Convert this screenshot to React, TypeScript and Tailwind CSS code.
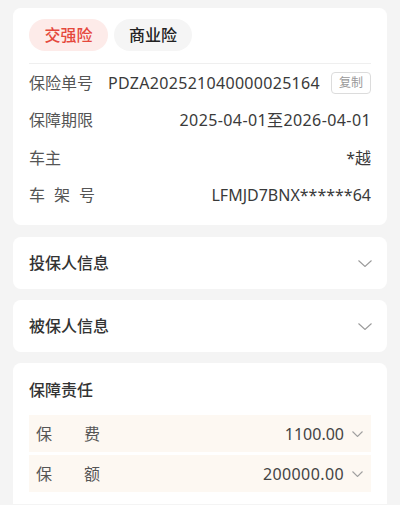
import React from "react";

const font = { fontFamily: '"Noto Sans", "Noto Sans CJK SC", sans-serif' };

function Chevron({ w, h, color }: { w: number; h: number; color: string }) {
  return (
    <svg width={w} height={h} viewBox={`0 0 ${w} ${h}`} fill="none">
      <polyline points={`0.5,0.5 ${w / 2},${h - 0.5} ${w - 0.5},0.5`} stroke={color} strokeWidth="1.1" />
    </svg>
  );
}

function InfoRow({
  label,
  value,
  spaced,
  extra,
  valueClass,
}: {
  label: string;
  value: string;
  spaced?: boolean;
  extra?: React.ReactNode;
  valueClass?: string;
}) {
  return (
    <div className="flex h-[37.5px] items-center justify-between text-[16px]">
      {spaced ? (
        <div className="flex w-[66px] justify-between text-[#555]">
          {label.split("").map((c, i) => (
            <span key={i}>{c}</span>
          ))}
        </div>
      ) : (
        <span className="text-[#555]">{label}</span>
      )}
      <div className="flex items-center">
        <span className={`text-[#3a3a3a] ${valueClass ?? ""}`}>{value}</span>
        {extra}
      </div>
    </div>
  );
}

function Collapse({ title }: { title: string }) {
  return (
    <div className="flex h-[52px] items-center justify-between rounded-[8px] bg-white pl-4 pr-[15px]">
      <span className="text-[16px] font-medium text-[#333]">{title}</span>
      <Chevron w={14} h={7} color="#9a9a9a" />
    </div>
  );
}

function DutyRow({ a, b, value, valueClass }: { a: string; b: string; value: string; valueClass?: string }) {
  return (
    <div className="flex h-[37px] items-center justify-between bg-[#fdf8f2] pl-[7px] pr-[8px] text-[16px]">
      <div className="flex w-[64px] justify-between text-[#555]">
        <span>{a}</span>
        <span>{b}</span>
      </div>
      <div className="flex items-center gap-[8px]">
        <span className={`text-[#444] ${valueClass ?? ""}`}>{value}</span>
        <Chevron w={11} h={6} color="#a0a0a0" />
      </div>
    </div>
  );
}

export default function App() {
  return (
    <div className="min-h-[505px] w-[400px] bg-[#f4f4f4] px-[13px] pt-[8px]" style={font}>
      <div className="rounded-[8px] bg-white px-4 pb-[11px] pt-[11px]">
        <div className="flex gap-[6px]">
          <div className="flex h-[32px] w-[79px] items-center justify-center rounded-full bg-[#fdebe9] text-[16px] font-medium text-[#e5483c]">
            交强险
          </div>
          <div className="flex h-[32px] w-[78px] items-center justify-center rounded-full bg-[#f5f5f5] text-[16px] font-medium text-[#222]">
            商业险
          </div>
        </div>
        <div className="mt-[12px] border-t border-[#efefef]" />
        <InfoRow
          label="保险单号"
          value="PDZA202521040000025164"
          valueClass="tracking-[0.3px]"
          extra={
            <span className="ml-[11px] flex h-[22px] items-center rounded-[4px] border border-[#dcdcdc] px-[7px] text-[12px] text-[#999]">
              复制
            </span>
          }
        />
        <InfoRow label="保障期限" value="2025-04-01至2026-04-01" valueClass="tracking-[0.4px]" />
        <InfoRow label="车主" value="*越" />
        <InfoRow label="车架号" value="LFMJD7BNX******64" spaced />
      </div>

      <div className="mt-[12px]">
        <Collapse title="投保人信息" />
      </div>
      <div className="mt-[11px]">
        <Collapse title="被保人信息" />
      </div>

      <div className="mt-[11px] rounded-t-[8px] bg-white px-4 pb-[12px] pt-[15px]">
        <div className="h-[24px] text-[16px] font-medium leading-[24px] text-[#333]">保障责任</div>
        <div className="mt-[13px] flex flex-col gap-[3px]">
          <DutyRow a="保" b="费" value="1100.00" />
          <DutyRow a="保" b="额" value="200000.00" valueClass="tracking-[0.4px]" />
        </div>
      </div>
    </div>
  );
}
